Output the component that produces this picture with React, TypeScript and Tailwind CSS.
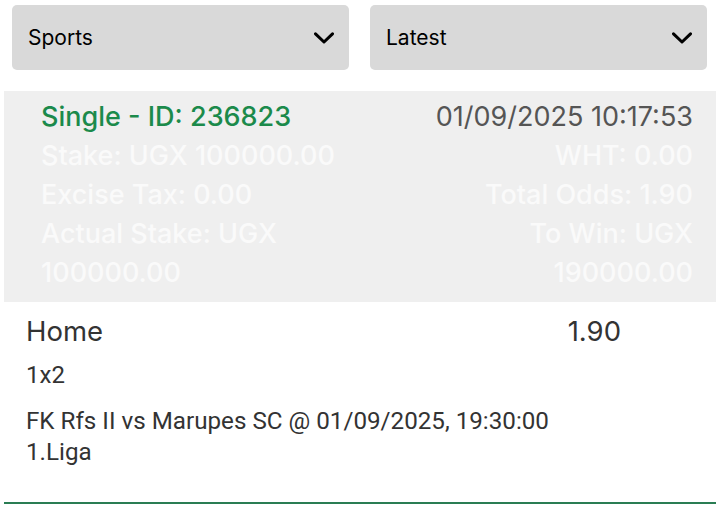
const head = { fontFamily: "Inter, 'Open Sans', sans-serif" };
const body = { fontFamily: "Roboto, 'Liberation Sans', sans-serif" };

function Chevron() {
  return (
    <svg width="20" height="12" viewBox="0 0 20 12" fill="none">
      <polyline
        points="1.5,1.8 10,10 18.5,1.8"
        stroke="#000"
        strokeWidth="3"
        strokeLinecap="round"
        strokeLinejoin="round"
      />
    </svg>
  );
}

function Select({ label }: { label: string }) {
  return (
    <div className="flex-1 h-[65px] rounded-[5px] bg-[#d9d9d9] flex items-center justify-between pl-[16px] pr-[15px]">
      <span className="text-[21px] text-black" style={head}>
        {label}
      </span>
      <Chevron />
    </div>
  );
}

export default function App() {
  return (
    <div className="w-[720px] h-[506px] bg-white overflow-hidden">
      <div className="flex gap-[21px] pl-[12px] pr-[13px] pt-[5px]">
        <Select label="Sports" />
        <Select label="Latest" />
      </div>

      <div
        className="mx-[4px] mt-[21px] bg-[#efefef] grid grid-cols-2 pl-[37px] pr-[23px] pt-[6px] pb-[10px] text-[27px] leading-[39px] font-medium text-[#fafafa]"
        style={head}
      >
        <div>
          <div className="text-[#1b8a4b]">Single - ID: 236823</div>
          <div>Stake: UGX 100000.00</div>
          <div>Excise Tax: 0.00</div>
          <div>
            Actual Stake: UGX
            <br />
            100000.00
          </div>
        </div>
        <div className="text-right">
          <div className="text-[#555555] font-normal">01/09/2025 10:17:53</div>
          <div>WHT: 0.00</div>
          <div>Total Odds: 1.90</div>
          <div>
            To Win: UGX
            <br />
            190000.00
          </div>
        </div>
      </div>

      <div className="mx-[4px] pl-[22px] pr-[23px] pt-[10px] text-[#333333]">
        <div className="flex justify-between pr-[72px] text-[27.5px] leading-[39px]" style={head}>
          <span>Home</span>
          <span>1.90</span>
        </div>
        <div className="mt-[8px] text-[24px] leading-[32px]" style={body}>
          1x2
        </div>
        <div className="mt-[15px] text-[24.2px] leading-[31px]" style={body}>
          <div>FK Rfs II vs Marupes SC @ 01/09/2025, 19:30:00</div>
          <div>1.Liga</div>
        </div>
      </div>

      <div className="mx-[4px] mt-[34px] h-[2px] bg-[#2a7d53]" />
    </div>
  );
}
